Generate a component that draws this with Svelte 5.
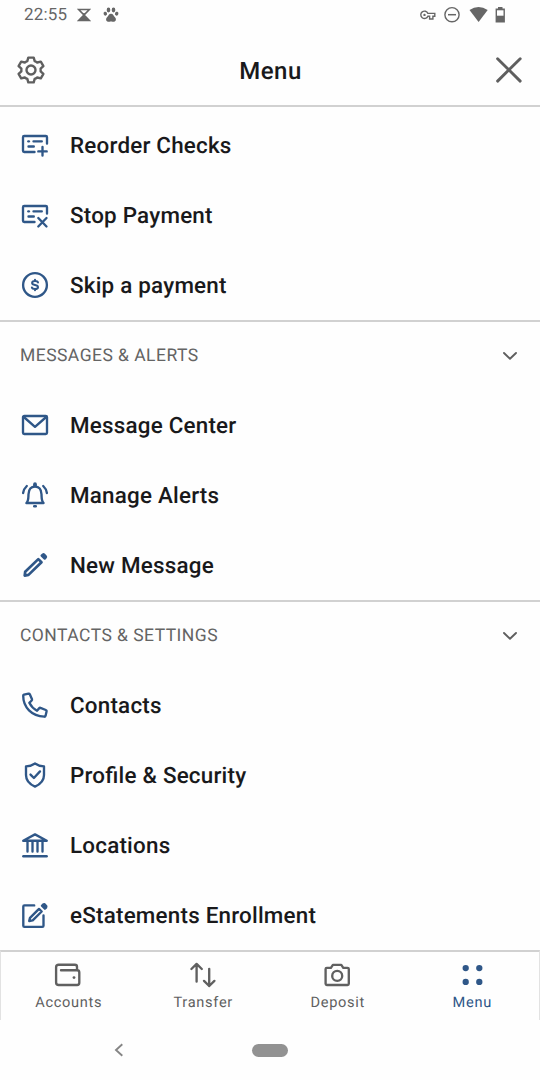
<script>
  const groups = [
    {
      title: null,
      items: [
        { icon: 'reorder', label: 'Reorder Checks' },
        { icon: 'stop', label: 'Stop Payment' },
        { icon: 'dollar', label: 'Skip a payment' }
      ]
    },
    {
      title: 'MESSAGES & ALERTS',
      items: [
        { icon: 'mail', label: 'Message Center' },
        { icon: 'bell', label: 'Manage Alerts' },
        { icon: 'pencil', label: 'New Message' }
      ]
    },
    {
      title: 'CONTACTS & SETTINGS',
      items: [
        { icon: 'phone', label: 'Contacts' },
        { icon: 'shield', label: 'Profile & Security' },
        { icon: 'bank', label: 'Locations' },
        { icon: 'compose', label: 'eStatements Enrollment' }
      ]
    }
  ];

  const tabs = [
    { icon: 'wallet', label: 'Accounts' },
    { icon: 'transfer', label: 'Transfer' },
    { icon: 'camera', label: 'Deposit' },
    { icon: 'dots', label: 'Menu', active: true }
  ];
</script>

{#snippet icon(name)}
  <svg class="icon" viewBox="0 0 28 28" width="28" height="28">
    {#if name === 'reorder' || name === 'stop'}
      <path d="M26 12.500V6.200Q26 5 24.800 5H3.200Q2 5 2 6.200V19.800Q2 21 3.200 21H13.500" />
      <path d="M12.500 10.300H20.800M7.500 15.500H12.800" />
      <path d="M7.300 10.300H7.900" />
      {#if name === 'reorder'}
        <path d="M21.500 16V24.500M17.300 20.400H25.700" />
      {:else}
        <path d="M17.300 17L25.500 25.500M25.500 17L17.300 25.500" />
      {/if}
    {:else if name === 'dollar'}
      <circle cx="14" cy="14" r="11.900" />
      <path d="M17 11.500Q16.600 10.100 14 10.100Q11.100 10.100 11.100 12Q11.100 13.500 14 14Q17 14.500 17 16.200Q17 18 14 18Q11.300 18 10.900 16.500M14 8.800V10M14 18V19.200" stroke-width="2" />
    {:else if name === 'mail'}
      <rect x="2" y="5" width="24" height="18" rx="1.300" />
      <path d="M2.800 6L14 15.800L25.200 6" />
    {:else if name === 'bell'}
      <path d="M5.400 22C7.700 19.800 7.300 16.500 7.500 13.200C7.700 8.700 10 5.600 14 5.600C18 5.600 20.300 8.700 20.500 13.200C20.700 16.500 20.300 19.800 22.600 22Z" />
      <path d="M14 3.200V4.400" stroke-width="3.800" />
      <path d="M13.300 25.200H14.700" stroke-width="2.600" />
      <path d="M5.800 5Q2.600 8 2.100 12M22.200 5Q25.400 8 25.900 12" />
    {:else if name === 'pencil'}
      <path d="M3.700 24.600L4.200 20.800L17.300 8.100L20.500 11.200L7.500 23.900Z" stroke-width="2.700" />
      <path d="M20.600 4.600L22 3.400Q22.600 3 23.200 3.600L24.800 5.200Q25.400 5.900 24.800 6.500L23.700 7.700Z" fill="currentColor" stroke-width="2.200" />
    {:else if name === 'phone'}
      <path d="M2.200 4.800Q2.200 4 3 3.700L7.500 2.600Q8.400 2.400 8.800 3.200L11 8.300Q11.200 9 10.700 9.500L8.300 11.800Q10.900 17 16 19.700L18.300 17.100Q18.800 16.600 19.500 16.900L24.800 19Q25.800 19.400 25.600 20.300L24.600 24.700Q24.300 25.700 23.300 25.700Q14 25.200 8 19.300Q2.200 13.500 2.200 4.800Z" />
    {:else if name === 'shield'}
      <path d="M14 2.500Q18 5.300 23 5.400V14Q23 21.700 14 25.600Q5 21.700 5 14V5.400Q10 5.300 14 2.500Z" />
      <path d="M9.500 13.600L12.900 17L19 10.400" />
    {:else if name === 'bank'}
      <path d="M2.200 9.700L14 3.400L25.800 9.700ZM6.500 10.500V20.500M11.500 10.500V20.500M16.500 10.500V20.500M21.500 10.500V20.500" />
      <path d="M2.300 25.200H25.700" />
    {:else if name === 'compose'}
      <path d="M13.200 4.400H3.400Q2.300 4.400 2.300 5.500V24.700Q2.300 25.800 3.400 25.800H21.300Q22.500 25.800 22.500 24.700V14.500" />
      <path d="M8.200 20.100L9 16.900L18 7.900L20.700 10.500L11.700 19.300Z" />
      <path d="M20.900 4.700L22.300 3.400L23.600 3.200L25.400 5.300L25.100 6.700L23.900 7.800Z" fill="currentColor" stroke-width="2.200" />
    {:else if name === 'wallet'}
      <path d="M7 9.200H23V5.800Q23 3.700 20.900 3.700H4.700Q2.100 3.700 2.100 6.300V21.400Q2.100 24 4.700 24H23.100Q25.300 24 25.300 21.800V11.400Q25.300 9.200 23.100 9.200" />
      <circle cx="20" cy="16.600" r="1.400" fill="currentColor" stroke="none" />
    {:else if name === 'transfer'}
      <path d="M7.600 20.500V3M2.400 8L7.600 2.900L12.800 8M20.200 7.800V25M15 19.900L20.200 25L25.400 19.900" />
    {:else if name === 'camera'}
      <path d="M2.600 8Q2.600 6.800 3.800 6.800H7.900L9.900 3.900H18.300L20.300 6.800H24.500Q25.800 6.800 25.800 8V22.700Q25.800 24 24.500 24H3.800Q2.600 24 2.600 22.700Z" />
      <circle cx="14.200" cy="14.900" r="5" />
    {:else if name === 'dots'}
      <g fill="currentColor" stroke="none">
        <circle cx="7.700" cy="7.100" r="3.150" /><circle cx="21.300" cy="7.100" r="3.150" />
        <circle cx="7.700" cy="20.900" r="3.150" /><circle cx="21.300" cy="20.900" r="3.150" />
      </g>
    {/if}
  </svg>
{/snippet}

<div class="screen">
  <div class="status">
    <span class="clock">22:55</span>
    <svg class="hourglass" width="14" height="14" viewBox="0 0 14 14">
      <path d="M1.700 1.500H12.300L1.700 12.500H12.300Z" fill="none" stroke="currentColor" stroke-width="1.600" />
      <path d="M7 7.200L12 12.500H2ZM5 5.200H9L7 7.200Z" fill="currentColor" />
    </svg>
    <svg class="paw" width="16" height="16" viewBox="0 0 16 16" fill="currentColor">
      <ellipse cx="2.300" cy="6.700" rx="1.700" ry="2" transform="rotate(-20 2.300 6.700)" />
      <ellipse cx="5.500" cy="3" rx="1.800" ry="2.400" />
      <ellipse cx="10.500" cy="3" rx="1.800" ry="2.400" />
      <ellipse cx="13.700" cy="6.700" rx="1.700" ry="2" transform="rotate(20 13.700 6.700)" />
      <path d="M8 6.700C10.200 6.700 10.600 8.800 12 10.300C13.500 12 13.200 14.400 11.200 14.800C9.800 15 9.300 14.400 8 14.400S6.200 15 4.800 14.800C2.800 14.400 2.500 12 4 10.300C5.400 8.800 5.800 6.700 8 6.700Z" />
    </svg>
    <svg class="right" width="88" height="18" viewBox="0 0 88 18" fill="none" stroke="currentColor">
      <path d="M8.400 7.900H15.300V10.800H13.400V13.500H10.100V10.800H8.400A3.700 3.700 0 1 1 8.400 7.900Z" transform="translate(-0.500 -0.500)" stroke-width="1.400" />
      <circle cx="4.500" cy="8.900" r="1.200" fill="currentColor" stroke="none" />
      <circle cx="32" cy="8.700" r="7.100" stroke-width="1.400" />
      <path d="M28 8.700H36" stroke-width="1.500" />
      <path d="M49.500 4Q58.500 -2.200 67.700 4L58.600 16Z" fill="currentColor" stroke="none" />
      <path d="M78 1H82.500V2.400H84.900V16.400H75.600V2.400H78Z" fill="currentColor" stroke="none" />
      <path d="M77 4.300H83.500V9.700H77Z" fill="#fff" stroke="none" />
    </svg>
  </div>

  <header>
    <svg class="gear" width="30" height="30" viewBox="-15 -15 30 30">
      <path d="M-2.700 -12.400H2.700L3.700 -8.900Q5 -8.400 6.200 -7.500L9.800 -8.400L12.400 -3.900L9.600 -1.300Q9.800 0 9.600 1.300L12.400 3.900L9.800 8.400L6.200 7.500Q5 8.400 3.700 8.900L2.700 12.400H-2.700L-3.700 8.900Q-5 8.400 -6.200 7.500L-9.800 8.400L-12.400 3.900L-9.600 1.300Q-9.800 0 -9.600 -1.300L-12.400 -3.900L-9.800 -8.400L-6.200 -7.500Q-5 -8.400 -3.700 -8.900Z" />
      <circle r="4.500" />
    </svg>
    <h1>Menu</h1>
    <svg class="close" width="28" height="28" viewBox="0 0 28 28">
      <path d="M2.600 2.700L25.200 25.100M25.200 2.700L2.600 25.100" />
    </svg>
  </header>

  <main>
    {#each groups as group}
      <section class:titled={group.title}>
        {#if group.title}
          <div class="heading">
            <h2>{group.title}</h2>
            <svg width="16" height="10" viewBox="0 0 16 10"><path d="M2 2L8 7.800L14 2" /></svg>
          </div>
        {/if}
        {#each group.items as item}
          <div class="row">
            {@render icon(item.icon)}
            <span>{item.label}</span>
          </div>
        {/each}
      </section>
    {/each}
  </main>

  <nav>
    {#each tabs as tab}
      <div class="tab" class:active={tab.active}>
        {@render icon(tab.icon)}
        <span>{tab.label}</span>
      </div>
    {/each}
  </nav>

  <div class="system">
    <svg class="back" width="10" height="14" viewBox="0 0 10 14"><path d="M8.300 1.300L2 7L8.300 12.700" /></svg>
    <div class="pill"></div>
  </div>
</div>

<style>
  :global(body) { background: #fff; }
  .screen {
    width: 540px;
    height: 1080px;
    display: flex;
    flex-direction: column;
    overflow: hidden;
    background: #fefefe;
    color: #19191b;
    font-family: Roboto, sans-serif;
    text-rendering: geometricPrecision;
  }
  svg { display: block; flex: none; }
  .icon {
    fill: none;
    stroke: currentColor;
    stroke-width: 2.350;
    stroke-linecap: round;
    stroke-linejoin: round;
  }
  .status {
    height: 35px;
    box-sizing: border-box;
    padding: 0 32px 6px 24px;
    display: flex;
    align-items: center;
    color: #666;
  }
  .clock { font-size: 17px; letter-spacing: 0.2px; width: 53px; line-height: 20px; }
  .paw { margin-left: 12px; }
  .right { margin-left: auto; margin-top: 1px; }
  header {
    height: 72px;
    box-sizing: border-box;
    border-bottom: 2px solid #d1d1d1;
    padding: 0 17px 0 16px;
    display: flex;
    align-items: center;
    justify-content: space-between;
  }
  .gear { fill: none; stroke: #5f5f5f; stroke-width: 2.400; stroke-linejoin: round; }
  .close { fill: none; stroke: #5f5f5f; stroke-width: 2.900; stroke-linecap: round; }
  h1 { margin: 2px 0 0; font-size: 24px; font-weight: 500; letter-spacing: 0.5px; }
  main { padding-top: 3px; height: 840px; flex: none; }
  .titled { border-top: 2px solid #d1d1d1; }
  .heading {
    height: 68px;
    padding: 0 22px 0 20px;
    box-sizing: border-box;
    display: flex;
    align-items: center;
    justify-content: space-between;
  }
  h2 { margin: 0; font-size: 17.500px; font-weight: 400; letter-spacing: 0.460px; color: #646464; }
  .heading path { fill: none; stroke: #5f5f5f; stroke-width: 1.900; stroke-linecap: round; stroke-linejoin: round; }
  .row {
    height: 70px;
    padding-left: 21px;
    display: flex;
    align-items: center;
    gap: 21px;
    color: #2f5788;
  }
  .row span {
    color: #19191b;
    font-size: 22.400px;
    font-weight: 500;
    letter-spacing: 0.220px;
    font-feature-settings: "liga" 1;
    white-space: nowrap;
    padding-top: 2px;
  }
  nav {
    height: 70px;
    box-sizing: border-box;
    border: 1px solid #e2e2e2;
    border-top: 2px solid #d1d1d1;
    border-bottom: 0;
    display: grid;
    grid-template-columns: repeat(4, 1fr);
  }
  .tab {
    padding-top: 9px;
    display: flex;
    flex-direction: column;
    align-items: center;
    color: #606060;
  }
  .tab span { margin-top: 3px; padding-left: 1px; font-size: 14.600px; line-height: 20px; letter-spacing: 0.700px; }
  .active { color: #2f5788; }
  .system { height: 60px; display: flex; align-items: center; padding-left: 114px; }
  .back path { fill: none; stroke: #858585; stroke-width: 1.900; }
  .pill { width: 36px; height: 13px; border-radius: 7px; background: #929292; margin-left: 128px; }
</style>
